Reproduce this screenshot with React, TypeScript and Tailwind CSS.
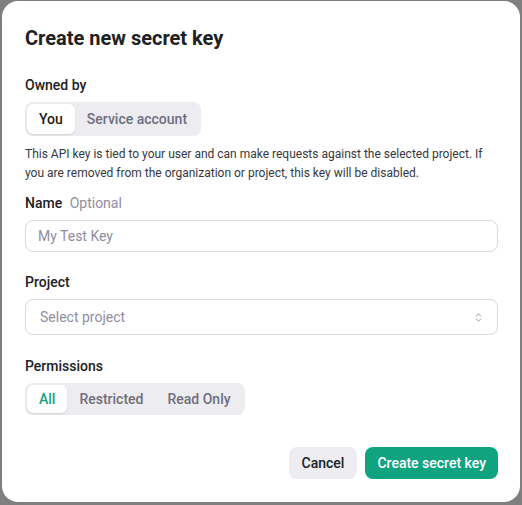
import { ChevronsUpDown } from "lucide-react";

function Segmented({
  options,
  active,
  activeClass,
  padY,
}: {
  options: string[];
  active: string;
  activeClass: string;
  padY: string;
}) {
  return (
    <div className="inline-flex rounded-lg bg-[#ececf1] p-[2px]">
      {options.map((option) => (
        <button
          key={option}
          type="button"
          className={
            option === active
              ? `rounded-md bg-white px-3 text-sm font-medium shadow-[0_1px_2px_rgba(0,0,0,0.12)] ${padY} ${activeClass}`
              : `px-3 text-sm font-medium text-[#6e6e80] ${padY}`
          }
        >
          {option}
        </button>
      ))}
    </div>
  );
}

export default function App() {
  return (
    <div
      className="h-[505px] w-[522px] bg-[#7f7f7f] pl-[2px] pr-[2px] pt-[1px]"
      style={{ fontFamily: "Roboto, 'Liberation Sans', sans-serif" }}
    >
      <div className="flex h-[501px] flex-col rounded-2xl bg-white pl-[23px] pr-[22px] text-[#202123]">
        <h1 className="mt-[23px] text-xl font-bold">Create new secret key</h1>

        <div className="mt-[23px] text-sm font-medium">Owned by</div>
        <div className="mt-[7px]">
          <Segmented options={["You", "Service account"]} active="You" activeClass="text-[#202123]" padY="py-[5px]" />
        </div>
        <p className="mt-[9px] text-xs leading-[19px] text-[#353740]">
          This API key is tied to your user and can make requests against the selected project. If you are removed
          from the organization or project, this key will be disabled.
        </p>

        <div className="mt-[10px] text-sm font-medium">
          Name <span className="ml-1 font-normal text-[#8e8ea0]">Optional</span>
        </div>
        <input
          className="mt-[7px] h-[32px] w-full rounded-lg border border-[#d9d9e3] px-3 text-sm placeholder:text-[#8e8ea0] outline-none"
          placeholder="My Test Key"
        />

        <div className="mt-[20px] text-sm font-medium">Project</div>
        <div className="mt-[7px] flex h-[36px] w-full items-center justify-between rounded-lg border border-[#d9d9e3] pl-[14px] pr-[13px] text-sm text-[#8e8ea0]">
          <span>Select project</span>
          <ChevronsUpDown className="size-[11px] text-[#8e8ea0]" strokeWidth={2} />
        </div>

        <div className="mt-[21px] text-sm font-medium">Permissions</div>
        <div className="mt-[7px]">
          <Segmented
            options={["All", "Restricted", "Read Only"]}
            active="All"
            activeClass="text-[#10a37f]"
            padY="py-1"
          />
        </div>

        <div className="mt-[32px] flex justify-end gap-2">
          <button type="button" className="h-8 rounded-lg bg-[#ececf1] px-[13px] text-sm font-medium text-[#202123]">
            Cancel
          </button>
          <button type="button" className="h-8 rounded-lg bg-[#10a37f] px-3 text-sm font-medium text-white">
            Create secret key
          </button>
        </div>
      </div>
    </div>
  );
}
